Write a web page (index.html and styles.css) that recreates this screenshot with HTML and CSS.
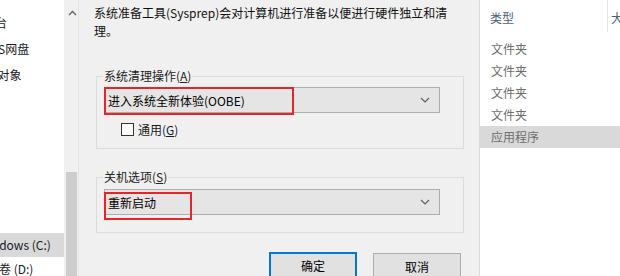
FILE: index.html
```html
<!DOCTYPE html>
<html lang="zh-CN">
<head>
    <meta charset="UTF-8">
    <title>系统准备工具</title>
    <link rel="stylesheet" href="styles.css">
</head>
<body>

    <!-- Explorer navigation pane -->
    <div class="nav">
        <div class="nav-item nav-first">工作台</div>
        <div class="nav-item">WPS网盘</div>
        <div class="nav-item">3D 对象</div>
        <div class="nav-item nav-selected">Windows (C:)</div>
        <div class="nav-item">新加卷 (D:)</div>
    </div>

    <div class="scrollbar">
        <svg class="scroll-up" width="9" height="6" viewBox="0 0 9 6">
            <path d="M1 5 L4.5 1.5 L8 5" fill="none" stroke="#606060" stroke-width="1.3"/>
        </svg>
        <div class="scroll-thumb"></div>
    </div>

    <!-- Sysprep dialog -->
    <div class="dialog">
        <p class="intro">系统准备工具(Sysprep)会对计算机进行准备以便进行硬件独立和清理。</p>

        <fieldset class="group group-clean">
            <legend>系统清理操作(<u>A</u>)</legend>
            <div class="combo">
                <span>进入系统全新体验(OOBE)</span>
                <svg width="10" height="6" viewBox="0 0 10 6">
                    <path d="M1 1 L5 5 L9 1" fill="none" stroke="#606060" stroke-width="1.2"/>
                </svg>
                <div class="mark mark-oobe"></div>
            </div>
            <label class="check">
                <span class="check-box"></span>
                <span>通用(<u>G</u>)</span>
            </label>
        </fieldset>

        <fieldset class="group group-shutdown">
            <legend>关机选项(<u>S</u>)</legend>
            <div class="combo">
                <span>重新启动</span>
                <svg width="10" height="6" viewBox="0 0 10 6">
                    <path d="M1 1 L5 5 L9 1" fill="none" stroke="#606060" stroke-width="1.2"/>
                </svg>
                <div class="mark mark-reboot"></div>
            </div>
        </fieldset>

        <div class="buttons">
            <button class="btn btn-default">确定</button>
            <button class="btn">取消</button>
        </div>
    </div>

    <!-- Explorer file list -->
    <div class="files">
        <div class="files-head">
            <div class="col-type">类型</div>
            <div class="col-size">大小</div>
        </div>
        <div class="file-row">文件夹</div>
        <div class="file-row">文件夹</div>
        <div class="file-row">文件夹</div>
        <div class="file-row">文件夹</div>
        <div class="file-row file-selected">应用程序</div>
    </div>

</body>
</html>
```

FILE: styles.css
```css
body {
    margin: 0;
    display: flex;
    height: 276px;
    overflow: hidden;
    font-family: "Noto Sans CJK SC", "Noto Sans", sans-serif;
    font-size: 12px;
    color: #1a1a1a;
}

/* navigation pane */
.nav {
    width: 64px;
    flex-shrink: 0;
    background: #fff;
    overflow: hidden;
    padding-top: 10px;
}
.nav-item {
    height: 26px;
    line-height: 26px;
    white-space: nowrap;
    text-indent: -20px;
}
.nav-first { text-indent: -29px; }
.nav-selected {
    margin-top: 145px;
    height: 24px;
    line-height: 24px;
    background: #d9d9d9;
    text-indent: -22px;
}
.nav-selected + .nav-item {
    text-indent: -25px;
    line-height: 24px;
}

.scrollbar {
    width: 14px;
    flex-shrink: 0;
    background: #f0f0f0;
    display: flex;
    flex-direction: column;
}
.scroll-up { margin: 10px 0 0 4px; }
.scroll-thumb {
    margin: auto 1px 0 2px;
    height: 104px;
    background: #cdcdcd;
}

/* dialog */
.dialog {
    width: 402px;
    flex-shrink: 0;
    box-sizing: border-box;
    background: #f0f0f0;
    border-left: 1px solid #e4e4e4;
    border-right: 1px solid #dcdcdc;
    padding: 4px 0 0 15px;
}
.intro {
    margin: 0;
    width: 372px;
    line-height: 18px;
    color: #111;
}

.group {
    width: 368px;
    box-sizing: border-box;
    margin: 0 0 0 2px;
    border: 1px solid #dcdcdc;
    padding: 3px 0 0 7px;
    min-width: 0;
}
.group legend {
    padding: 0 1px;
    margin-left: -1px;
    line-height: 16px;
    color: #222;
}
.group-clean {
    margin-top: 28px;
    padding-bottom: 12px;
}
.group-shutdown {
    margin-top: 20px;
    padding-top: 4px;
    padding-bottom: 17px;
}

.combo {
    position: relative;
    width: 336px;
    height: 26px;
    box-sizing: border-box;
    border: 1px solid #adadad;
    background: #e5e5e5;
    display: flex;
    align-items: center;
    justify-content: space-between;
    padding: 0 9px 0 3px;
    color: #000;
}

/* red highlight frames drawn over the combos */
.mark {
    position: absolute;
    left: -1px;
    border: 2px solid #e2262e;
    box-sizing: border-box;
}
.mark-oobe {
    top: -1px;
    width: 190px;
    height: 28px;
}
.mark-reboot {
    top: 2px;
    width: 88px;
    height: 28px;
}

.check {
    display: flex;
    align-items: center;
    gap: 4px;
    margin: 10px 0 0 17px;
    height: 13px;
}
.check-box {
    width: 11px;
    height: 11px;
    border: 1px solid #333;
    background: #fff;
}

.buttons {
    display: flex;
    gap: 16px;
    margin: 20px 0 0 175px;
}
.btn {
    width: 88px;
    height: 26px;
    box-sizing: border-box;
    border: 1px solid #adadad;
    background: #e1e1e1;
    font-family: inherit;
    font-size: 12px;
    color: #000;
    padding: 0;
}
.btn-default {
    border: 2px solid #0078d7;
    margin-top: -1px;
    height: 27px;
}

/* file list */
.files {
    flex: 1;
    background: #fff;
    overflow: hidden;
    color: #6d6d6d;
}
.files-head {
    display: flex;
    height: 32px;
    margin-bottom: 6px;
    white-space: nowrap;
}
.col-type {
    width: 117px;
    flex-shrink: 0;
    padding: 4px 0 0 10px;
    line-height: 28px;
    border-right: 1px solid #e5e5e5;
    color: #4c607a;
}
.col-size {
    padding: 4px 0 0 3px;
    line-height: 28px;
    color: #4c607a;
}
.file-row {
    height: 22px;
    line-height: 22px;
    padding-left: 11px;
}
.file-selected { background: #d9d9d9; }
```
